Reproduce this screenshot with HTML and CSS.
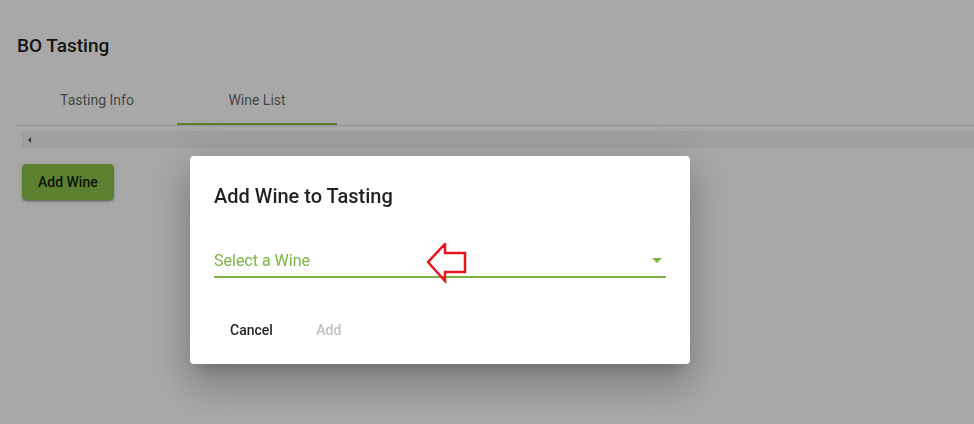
FILE: index.html
```html
<!DOCTYPE html>
<html>
<head>
<meta charset="utf-8">
<link rel="stylesheet" href="styles.css">
</head>
<body>
<div class="page">
  <h1 class="title">BO Tasting</h1>
  <div class="tabs">
    <div class="tab">Tasting Info</div>
    <div class="tab active">Wine List</div>
  </div>
  <div class="scroller">
    <span class="scroll-left"></span>
  </div>
  <button class="btn-add-wine">Add Wine</button>
</div>
<div class="overlay">
  <div class="dialog">
    <h2 class="dialog-title">Add Wine to Tasting</h2>
    <div class="field">
      <span class="placeholder">Select a Wine</span>
      <span class="caret"></span>
      <svg class="pointer" width="42" height="42" viewBox="0 0 42 42">
        <polygon points="1,19 18,1 18,10 38,10 38,29 18,29 18,38" fill="none" stroke="#e8141e" stroke-width="2.5"/>
      </svg>
    </div>
    <div class="actions">
      <button class="text-btn">Cancel</button>
      <button class="text-btn disabled">Add</button>
    </div>
  </div>
</div>
</body>
</html>
```

FILE: styles.css
```css
* { box-sizing: border-box; }
html, body { margin: 0; padding: 0; }
body {
  width: 974px;
  height: 424px;
  overflow: hidden;
  background: #fff;
  font-family: Roboto, "Noto Sans", sans-serif;
  color: rgba(0,0,0,0.87);
}
.page {
  padding: 34px 0 0 17px;
}
.title {
  margin: 0;
  font-size: 19px;
  font-weight: 500;
  line-height: 24px;
  color: rgba(0,0,0,0.9);
}
.tabs {
  display: flex;
  margin-top: 18px;
  border-bottom: 1px solid rgba(0,0,0,0.12);
}
.tab {
  width: 160px;
  height: 49px;
  display: flex;
  align-items: center;
  justify-content: center;
  font-size: 14px;
  color: rgba(0,0,0,0.62);
  padding-bottom: 1px;
}
.tab.active {
  border-bottom: 2px solid #8bc34a;
  margin-bottom: -1px;
  padding-bottom: 0;
}
.scroller {
  margin: 5px 0 0 5px;
  height: 17px;
  background: #f1f1f1;
  display: flex;
  align-items: center;
  padding-left: 6px;
}
.scroll-left {
  width: 0;
  height: 0;
  border-top: 3px solid transparent;
  border-bottom: 3px solid transparent;
  border-right: 3px solid #505050;
}
.btn-add-wine {
  margin: 16px 0 0 5px;
  height: 36px;
  padding: 0 16px;
  border: none;
  border-radius: 4px;
  background: #8bc34a;
  color: rgba(0,0,0,0.87);
  font-family: Roboto, sans-serif;
  font-size: 14px;
  font-weight: 500;
  box-shadow: 0 3px 1px -2px rgba(0,0,0,.2), 0 2px 2px 0 rgba(0,0,0,.14), 0 1px 5px 0 rgba(0,0,0,.12);
}
.overlay {
  position: fixed;
  inset: 0;
  background: rgba(0,0,0,0.34);
  padding: 156px 0 0 190px;
}
.dialog {
  width: 500px;
  height: 208px;
  background: #fff;
  border-radius: 4px;
  padding: 24px 24px 0 24px;
  box-shadow: 0 11px 15px -7px rgba(0,0,0,.2), 0 24px 38px 3px rgba(0,0,0,.14), 0 9px 46px 8px rgba(0,0,0,.12);
}
.dialog-title {
  margin: 0;
  font-size: 20px;
  font-weight: 500;
  line-height: 32px;
  color: rgba(0,0,0,0.87);
}
.field {
  position: relative;
  margin-top: 36px;
  height: 24px;
  border-bottom: 2px solid #7cb342;
  display: flex;
  align-items: center;
  justify-content: space-between;
  padding-bottom: 4px;
  box-sizing: content-box;
}
.placeholder {
  font-size: 16px;
  color: #7cb342;
}
.caret {
  width: 0;
  height: 0;
  border-left: 5px solid transparent;
  border-right: 5px solid transparent;
  border-top: 5px solid #7cb342;
  margin-right: 4px;
}
.pointer {
  position: absolute;
  left: 213px;
  top: -5px;
}
.actions {
  display: flex;
  gap: 8px;
  margin-top: 34px;
}
.text-btn {
  height: 36px;
  min-width: 64px;
  padding: 0 16px;
  border: none;
  background: transparent;
  font-family: Roboto, sans-serif;
  font-size: 14px;
  font-weight: 500;
  color: rgba(0,0,0,0.87);
}
.text-btn.disabled {
  color: rgba(0,0,0,0.26);
}
```
